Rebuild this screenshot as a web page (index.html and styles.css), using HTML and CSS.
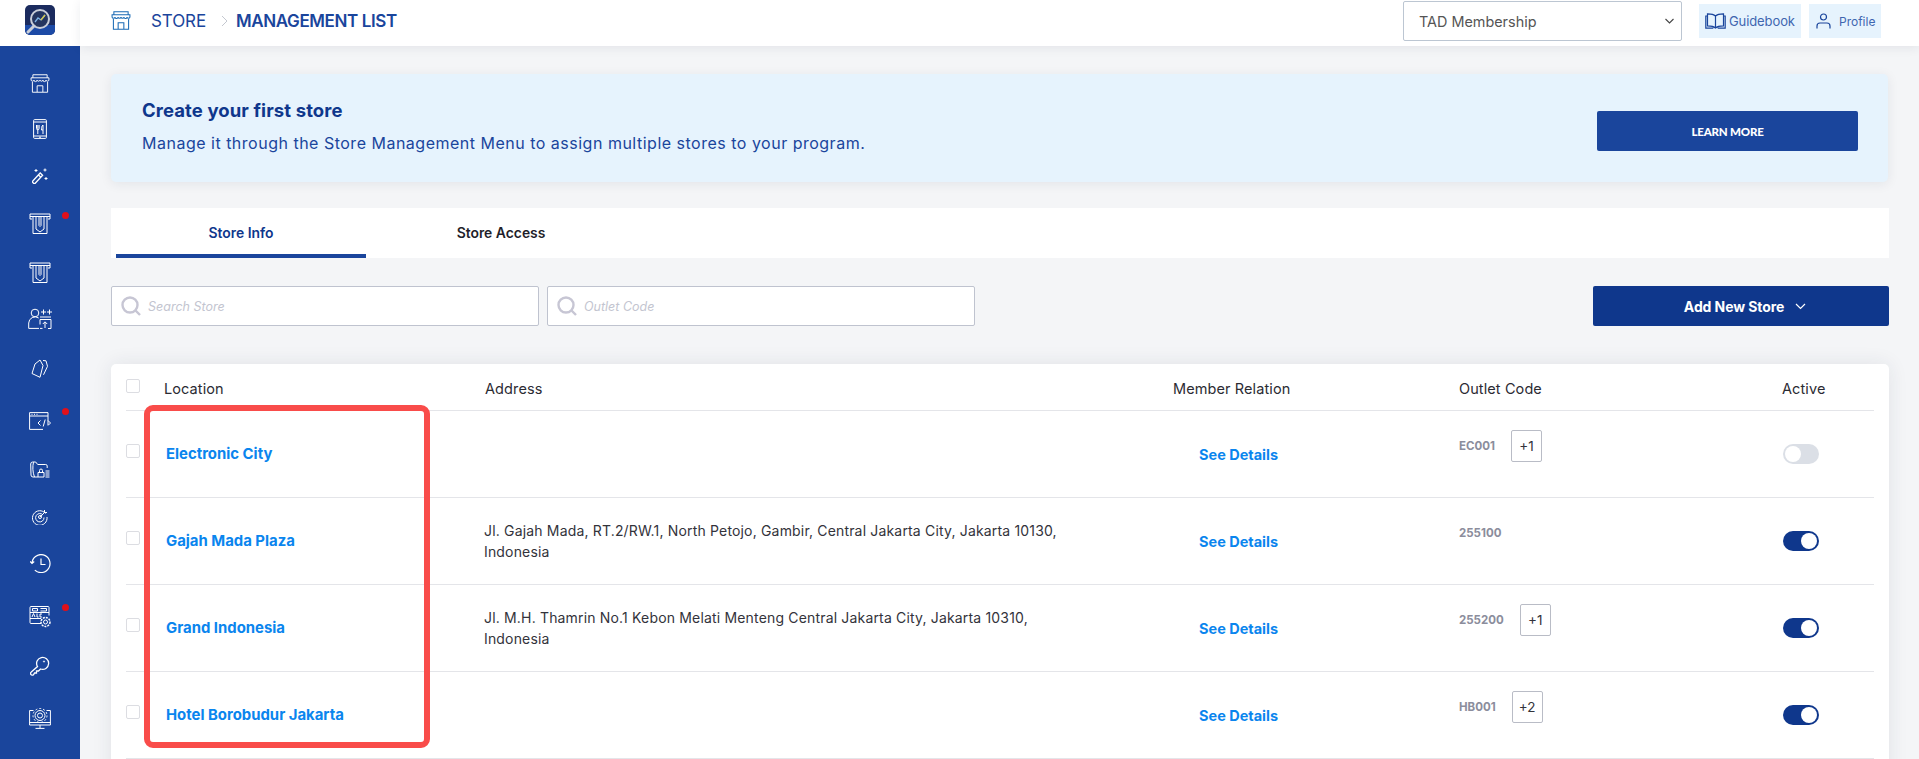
FILE: index.html
```html
<!DOCTYPE html>
<html lang="en">
  <head>
    <meta charset="UTF-8" />
    <meta name="viewport" content="width=device-width, initial-scale=1.0" />
    <title>Store Management List</title>
    <link rel="stylesheet" href="styles.css">
  </head>
  <body>
    <svg class="defs" width="0" height="0">
      <symbol id="i-store" viewBox="0 0 20 20">
        <path d="M2.5 4V.8h15V4M.6 4h18.8v2.4a1.6 1.6 0 0 1-3.1 0 1.6 1.6 0 0 1-3.2 0 1.6 1.6 0 0 1-3.1 0 1.6 1.6 0 0 1-3.1 0 1.6 1.6 0 0 1-3.2 0 1.6 1.6 0 0 1-3.1 0zM2 8.400v10.800h16V8.400M7 19v-6.600h6V19"/>
      </symbol>
    </svg>

    <aside class="sidebar">
      <div class="logo-wrap">
        <svg class="logo" width="30" height="30" viewBox="0 0 30 30">
          <rect width="30" height="30" rx="5" fill="#1b2b5e"/>
          <path d="M0 20h30v5a5 5 0 0 1-5 5H5a5 5 0 0 1-5-5z" fill="#1c4aa6"/>
          <circle cx="15" cy="14" r="9" fill="#24355f" stroke="#c9ced8" stroke-width="2"/>
          <path d="M9 21l-6 6" stroke="#c9ced8" stroke-width="3" stroke-linecap="round"/>
          <path d="M10 17l3-4 3 2 4-5" fill="none" stroke="#7fb4e6" stroke-width="1.300"/>
          <path d="M16 15l4-5" fill="none" stroke="#d8c94a" stroke-width="1.300"/>
        </svg>
      </div>
      <nav class="nav">
        <div class="nav-item n1"><svg class="ico" width="20" height="19"><use href="#i-store"/></svg></div>
        <div class="nav-item n2">
          <svg class="ico" width="14" height="20" viewBox="0 0 14 20">
            <rect x=".6" y=".6" width="12.800" height="18.800" rx="1"/>
            <path d="M.6 3h12.800M.6 17h12.800M6 18.200h2M3.500 6v3.500a1.300 1.300 0 0 0 2.600 0V6M4.800 6v9M10 6c-1.500 1-1.500 3.500-1.500 5H10M10 6v9"/>
          </svg>
        </div>
        <div class="nav-item n3">
          <svg class="ico" width="16" height="16" viewBox="0 0 16 16">
            <path d="M.8 13l7.400-8 2.400 2.200-7.400 8.100a1.100 1.100 0 0 1-1.600 0l-.8-.8a1 1 0 0 1 0-1.500zM6.500 7l2.400 2.200" stroke-width="1.300"/>
            <path d="M4 1v3M2.500 2.500h3M13 .5v3M11.500 2h3M14 9v3M12.500 10.500h3"/>
          </svg>
        </div>
        <div class="nav-item n4 has-dot">
          <svg class="ico" width="22" height="21" viewBox="0 0 22 21">
            <path d="M3 6H1V1h20v5h-2M1 3.500h20M4 3.500v17h14v-17M7 3.500v12.500l4 3 4-3V3.500M10 3.500v9l1 1 1-1v-9"/>
          </svg>
        </div>
        <div class="nav-item n5">
          <svg class="ico" width="22" height="21" viewBox="0 0 22 21">
            <path d="M3 6H1V1h20v5h-2M1 3.500h20M4 3.500v17h14v-17M7 3.500v12.500l4 3 4-3V3.500M10 3.500v9l1 1 1-1v-9"/>
          </svg>
        </div>
        <div class="nav-item n6">
          <svg class="ico" width="24" height="21" viewBox="0 0 24 21">
            <circle cx="7" cy="5" r="3.800"/>
            <path d="M11 20.400H.7v-5.400a6.400 6.400 0 0 1 10-5M13 4h5M15.500 1.500v5M19 4h5M21.500 1.500v5M12 9h11M12 11.500h11M12 11.500v5M23 11.500v9h-3M12 20.400h2.500M17 20v-6M14.800 16l2.200-2.200 2.200 2.200"/>
          </svg>
        </div>
        <div class="nav-item n7">
          <svg class="ico" width="18" height="19" viewBox="0 0 18 19">
            <path d="M1 14.500L4 5l5-4 3 5.500-3 11.800zM7 6.300h.1M12 1.500l3 .3 1.500 5.500-4 8.500"/>
          </svg>
        </div>
        <div class="nav-item n8 has-dot">
          <svg class="ico" width="22" height="18" viewBox="0 0 22 18">
            <path d="M19 13V.6H.6v16.800H14M.6 4h18.400M2.500 2.300h1M5 2.300h1M7.500 2.300h1M11.500 8.500L9 11l2.500 2.500M19 8.500l2.500 2.500-2.500 2.500M16.200 7.500l-2 7"/>
          </svg>
        </div>
        <div class="nav-item n9">
          <svg class="ico" width="20" height="17" viewBox="0 0 20 17">
            <path d="M8 16H3a2 2 0 0 1-2-2L0.700 3a2 2 0 0 1 2-2h3l2 2.500h8a1.500 1.500 0 0 1 1.500 1.500v2M3.500 1.200c-1 4-1 10 1 14.800M8 16v-4.500h6V16zM9.500 11.500V9.500a1.500 1.500 0 0 1 3 0v2M15.500 10h4M15.500 12h4M15.500 14h4M15.500 16h4"/>
          </svg>
        </div>
        <div class="nav-item n10">
          <svg class="ico" width="16" height="16" viewBox="0 0 16 16">
            <path d="M13.500 4.500A7.300 7.300 0 1 0 15 8M11 6a4.200 4.200 0 1 0 1 2.500"/>
            <circle cx="8" cy="8" r="1.500"/>
            <path d="M8 8l5-5M12.500 1v2.500H15"/>
          </svg>
        </div>
        <div class="nav-item n11">
          <svg class="ico" width="21" height="19" viewBox="0 0 21 19">
            <path d="M2 9.500a9 9 0 1 1 2.800 6.600M0 7.500l2 2 2.200-2M11 4.500v6h4.500" stroke-width="1.200"/>
          </svg>
        </div>
        <div class="nav-item n12 has-dot">
          <svg class="ico" width="22" height="22" viewBox="0 0 22 22">
            <path d="M12 17.500H2a1 1 0 0 1-1-1V1.500a1 1 0 0 1 1-1h17a1 1 0 0 1 1 1v8M1 6.500h19M1 12.500h11M3.500 2.500h5v2.500h-5zM11.500 2.500h6v2.500h-6M3 11l1.500-3.500L6 11M8 7.500v3.500h1.500M13 8h-2v3h2"/>
            <circle cx="16.500" cy="16" r="2"/>
            <circle cx="16.500" cy="16" r="4.500" stroke-width="1.500" stroke-dasharray="2 1"/>
          </svg>
        </div>
        <div class="nav-item n13">
          <svg class="ico" width="20" height="20" viewBox="0 0 20 20">
            <path d="M7.500 10.500a6 6 0 1 1 3 2.500l-2 2H6.500v2h-2l-1 1.800c-1 .8-3.200.2-2.900-1.500 0-.5.300-1 .7-1.300z" stroke-width="1.300"/>
            <circle cx="14" cy="5.500" r=".6"/>
          </svg>
        </div>
        <div class="nav-item n14">
          <svg class="ico" width="22" height="22" viewBox="0 0 22 22">
            <path d="M4.500 3.500H.6v14.500h20.800V3.500h-3.900M.6 15.500h20.800M11 18v3M6.500 21.400h9"/>
            <circle cx="11" cy="8.500" r="2.500"/>
            <circle cx="11" cy="8.500" r="5"/>
            <circle cx="11" cy="8.500" r="7" stroke-dasharray="2 2"/>
          </svg>
        </div>
      </nav>
    </aside>

    <div class="page">
      <header class="topbar">
        <div class="crumbs">
          <svg class="crumb-icon" width="20" height="19"><use href="#i-store"/></svg>
          <span class="crumb">STORE</span>
          <svg class="crumb-sep" width="7" height="12" viewBox="0 0 7 12"><path d="M1 1l5 5-5 5"/></svg>
          <span class="crumb-now">MANAGEMENT LIST</span>
        </div>
        <div class="top-actions">
          <select class="program">
            <option>TAD Membership</option>
          </select>
          <a class="top-btn guide">
            <svg class="btn-icon" width="21" height="16" viewBox="0 0 21 16">
              <path d="M10.500 3C9 1.500 6 .8 2.500.8v12c3.500 0 6.500.7 8 2.200 1.500-1.500 4.500-2.200 8-2.200V.8C15 .8 12 1.500 10.500 3zM10.500 3v12M2.500 3H.8v12.200h7.500M18.500 3h1.700v12.200h-7.500"/>
            </svg>
            Guidebook
          </a>
          <a class="top-btn profile">
            <svg class="btn-icon" width="15" height="16" viewBox="0 0 15 16">
              <circle cx="7.500" cy="4" r="3"/>
              <path d="M1 15.500v-2.500a3 3 0 0 1 3-3h7a3 3 0 0 1 3 3v2.500"/>
            </svg>
            Profile
          </a>
        </div>
      </header>

      <main class="main">
        <section class="banner">
          <div>
            <h2 class="banner-title">Create your first store</h2>
            <p class="banner-text">Manage it through the Store Management Menu to assign multiple stores to your program.</p>
          </div>
          <a class="learn">LEARN MORE</a>
        </section>

        <div class="tabs">
          <div class="tab active">Store Info</div>
          <div class="tab">Store Access</div>
        </div>

        <div class="filters">
          <label class="search">
            <svg class="search-icon" width="20" height="20" viewBox="0 0 20 20"><circle cx="9" cy="9" r="7.500"/><path d="M14.500 14.500l4.500 4.500"/></svg>
            <span class="hint s-store">Search Store</span>
          </label>
          <label class="search">
            <svg class="search-icon" width="20" height="20" viewBox="0 0 20 20"><circle cx="9" cy="9" r="7.500"/><path d="M14.500 14.500l4.500 4.500"/></svg>
            <span class="hint s-code">Outlet Code</span>
          </label>
          <a class="add">
            Add New Store
            <svg width="11" height="7" viewBox="0 0 11 7"><path d="M1 1l4.500 4.500L10 1"/></svg>
          </a>
        </div>

        <section class="card">
          <div class="row head">
            <span class="check"></span>
            <span class="h-loc">Location</span>
            <span class="h-addr">Address</span>
            <span>Member Relation</span>
            <span>Outlet Code</span>
            <span>Active</span>
          </div>

          <div class="row">
            <span class="check"></span>
            <a class="name">Electronic City</a>
            <span class="addr"></span>
            <a class="details">See Details</a>
            <div class="codes"><span class="code">EC001</span><span class="more">+1</span></div>
            <div class="toggle"><span class="knob"></span></div>
          </div>

          <div class="row">
            <span class="check"></span>
            <a class="name">Gajah Mada Plaza</a>
            <span class="addr">Jl. Gajah Mada, RT.2/RW.1, North Petojo, Gambir, Central Jakarta City, Jakarta 10130,<br>Indonesia</span>
            <a class="details">See Details</a>
            <div class="codes"><span class="code">255100</span></div>
            <div class="toggle on"><span class="knob"></span></div>
          </div>

          <div class="row">
            <span class="check"></span>
            <a class="name">Grand Indonesia</a>
            <span class="addr">Jl. M.H. Thamrin No.1 Kebon Melati Menteng Central Jakarta City, Jakarta 10310,<br>Indonesia</span>
            <a class="details">See Details</a>
            <div class="codes"><span class="code">255200</span><span class="more">+1</span></div>
            <div class="toggle on"><span class="knob"></span></div>
          </div>

          <div class="row">
            <span class="check"></span>
            <a class="name">Hotel Borobudur Jakarta</a>
            <span class="addr"></span>
            <a class="details">See Details</a>
            <div class="codes"><span class="code">HB001</span><span class="more">+2</span></div>
            <div class="toggle on"><span class="knob"></span></div>
          </div>

          <div class="callout"></div>
        </section>
      </main>
    </div>
  </body>
</html>
```

FILE: styles.css
```css
* {
  box-sizing: border-box;
}
html,
body {
  margin: 0;
  height: 100%;
  overflow: hidden;
}
body {
  display: flex;
  background: #f4f5f7;
  font-family: Inter, "Liberation Sans", sans-serif;
  color: #2b2b33;
}
.defs {
  position: absolute;
}

/* sidebar */
.sidebar {
  width: 80px;
  flex: none;
  display: flex;
  flex-direction: column;
  background: #1a459c;
}
.logo-wrap {
  height: 46px;
  flex: none;
  background: #fff;
  display: flex;
  justify-content: center;
  padding-top: 5px;
}
.logo {
  display: block;
}
.nav {
  display: flex;
  flex-direction: column;
  align-items: center;
  padding-top: 28px;
}
.nav-item {
  position: relative;
  width: 80px;
  display: flex;
  justify-content: center;
}
.ico {
  display: block;
  fill: none;
  stroke: #fff;
  stroke-width: 1;
}
.has-dot::after {
  content: "";
  position: absolute;
  left: 62px;
  top: -1px;
  width: 7px;
  height: 7px;
  border-radius: 50%;
  background: #e0101a;
}
.n1 { margin-bottom: 26px; }
.n2 { margin-bottom: 29px; }
.n3 { margin-bottom: 29px; }
.n4 { margin-bottom: 28px; }
.n5 { margin-bottom: 25px; }
.n6 { margin-bottom: 30px; }
.n7 { margin-bottom: 34px; }
.n8 { margin-bottom: 31px; }
.n9 { margin-bottom: 31px; }
.n10 { margin-bottom: 29px; }
.n11 { margin-bottom: 33px; }
.n12 { margin-bottom: 28px; }
.n13 { margin-bottom: 31px; }
.n8.has-dot::after { top: -4px; }
.n12.has-dot::after { top: -2px; }

/* top bar */
.page {
  flex: 1;
  min-width: 0;
  display: flex;
  flex-direction: column;
}
.topbar {
  height: 46px;
  flex: none;
  background: #fff;
  box-shadow: 0 2px 10px rgba(30, 40, 70, 0.08);
  display: flex;
  justify-content: space-between;
  padding-left: 31px;
  position: relative;
}
.crumbs {
  display: flex;
  align-items: center;
  height: 41px;
}
.crumb-icon {
  fill: none;
  stroke: #1a6ab5;
  stroke-width: 1.100;
  margin-right: 20px;
}
.crumb {
  font-size: 17px;
  color: #1a459c;
  letter-spacing: -0.1px;
}
.crumb-sep {
  fill: none;
  stroke: #c4c8d0;
  stroke-width: 1;
  margin: 0 8px 0 15px;
}
.crumb-now {
  font-size: 17px;
  font-weight: 600;
  color: #1a459c;
  letter-spacing: -0.4px;
}
.top-actions {
  display: flex;
  align-items: flex-start;
  padding: 1px 38px 0 0;
}
.program {
  appearance: none;
  width: 279px;
  height: 40px;
  padding-left: 15px;
  margin-right: 17px;
  background: #fff url("data:image/svg+xml,%3Csvg xmlns='http://www.w3.org/2000/svg' width='9' height='6'%3E%3Cpath d='M.5 1l4 4 4-4' fill='none' stroke='%23444' stroke-width='1.100'/%3E%3C/svg%3E") no-repeat right 7px center;
  border: 1px solid #bcc6d2;
  border-radius: 2px;
  font-family: inherit;
  font-size: 14.400px;
  color: #555;
}
.top-btn {
  height: 34px;
  margin-top: 3px;
  background: #e6f3fd;
  color: #3f66b0;
  font-size: 12px;
  display: flex;
  align-items: center;
}
.guide {
  width: 102px;
  padding-left: 6px;
  gap: 3px;
  margin-right: 8px;
  font-size: 13px;
  letter-spacing: -0.1px;
}
.profile {
  width: 72px;
  padding-left: 7px;
  gap: 8px;
}
.btn-icon {
  fill: none;
  stroke: #1a459c;
  stroke-width: 1.200;
}

/* content */
.main {
  flex: 1;
  padding: 28px 30px 0 31px;
}
.banner {
  height: 108px;
  margin-right: 1px;
  background: #e6f3fd;
  border-radius: 5px;
  box-shadow: 0 2px 12px rgba(30, 40, 70, 0.08);
  padding: 22px 30px 0 31px;
  display: flex;
  justify-content: space-between;
  align-items: flex-start;
}
.banner-title {
  margin: 0;
  font-size: 18.500px;
  line-height: 28px;
  font-weight: 700;
  color: #0f378c;
  letter-spacing: 0.1px;
}
.banner-text {
  margin: 7px 0 0;
  font-size: 16px;
  line-height: 24px;
  letter-spacing: 0.5px;
  color: #1a459c;
}
.learn {
  width: 261px;
  height: 40px;
  margin-top: 15px;
  background: #1a459c;
  border-radius: 2px;
  color: #fff;
  font-family: Lato, sans-serif;
  font-size: 11.500px;
  font-weight: 900;
  letter-spacing: -0.2px;
  display: flex;
  align-items: center;
  justify-content: center;
}
.tabs {
  height: 50px;
  margin-top: 26px;
  padding-left: 5px;
  background: #fff;
  display: flex;
}
.tab {
  width: 270px;
  font-size: 13.900px;
  font-weight: 600;
  color: #1f1f2b;
  display: flex;
  align-items: center;
  justify-content: center;
}
.tab.active {
  width: 250px;
  color: #0f378c;
  border-bottom: 4px solid #1a459c;
  padding-top: 4px;
}
.filters {
  display: flex;
  gap: 8px;
  margin-top: 28px;
}
.search {
  width: 428px;
  height: 40px;
  background: #fff;
  border: 1px solid #bfc3cf;
  border-radius: 2px;
  display: flex;
  align-items: center;
  padding-left: 9px;
  gap: 7px;
}
.search-icon {
  fill: none;
  stroke: #c7c6d4;
  stroke-width: 2.400;
}
.hint {
  font-size: 12.500px;
  font-style: italic;
  color: #c3c5d0;
}
.add {
  margin-left: auto;
  width: 296px;
  height: 40px;
  padding-left: 8px;
  background: #0f378c;
  border-radius: 2px;
  color: #fff;
  font-size: 14px;
  font-weight: 700;
  letter-spacing: -0.1px;
  display: flex;
  align-items: center;
  justify-content: center;
  gap: 11px;
}
.add svg {
  fill: none;
  stroke: #fff;
  stroke-width: 1.200;
}
.card {
  position: relative;
  margin-top: 38px;
  padding: 0 15px;
  background: #fff;
  border-radius: 5px;
  box-shadow: 0 0 20px rgba(30, 40, 70, 0.09);
  height: 420px;
}
.row {
  display: grid;
  grid-template-columns: 38px 321px 688px 286px 323px 92px;
  align-items: center;
  height: 87px;
  border-bottom: 1px solid #e4e5e9;
  font-size: 14px;
}
.row.head {
  height: 47px;
  padding-top: 3px;
  font-size: 14.500px;
  letter-spacing: 0.1px;
}
.check {
  width: 14px;
  height: 14px;
  margin-bottom: 6px;
  border: 1px solid #dcdde2;
  border-radius: 2px;
}
.head .check {
  margin-bottom: 5px;
}
.name {
  padding-left: 2px;
  font-size: 14.900px;
  font-weight: 700;
  color: #0a85ee;
}
.addr {
  margin-left: -1px;
  line-height: 21px;
  letter-spacing: 0.17px;
  color: #33333b;
}
.details {
  padding-left: 26px;
  font-size: 14.500px;
  font-weight: 700;
  color: #0a85ee;
}
.codes {
  display: flex;
  align-items: center;
  gap: 16px;
  margin-bottom: 16px;
  height: 32px;
}
.code {
  font-size: 11.500px;
  font-weight: 700;
  color: #8b8d9c;
}
.more {
  width: 31px;
  height: 32px;
  border: 1px solid #b9bcc6;
  border-radius: 2px;
  display: flex;
  align-items: center;
  justify-content: center;
  font-size: 13.500px;
  color: #33333b;
}
.toggle {
  width: 36px;
  height: 20px;
  margin-left: 1px;
  padding: 2px;
  border-radius: 10px;
  background: #dbdfe6;
  display: flex;
}
.toggle.on {
  justify-content: flex-end;
  background: #0f378c;
}
.knob {
  width: 16px;
  height: 16px;
  border-radius: 50%;
  background: #fff;
}
.callout {
  position: absolute;
  left: 33px;
  top: 41px;
  width: 286px;
  height: 343px;
  border: 6px solid #f94c4a;
  border-radius: 9px;
}
```
